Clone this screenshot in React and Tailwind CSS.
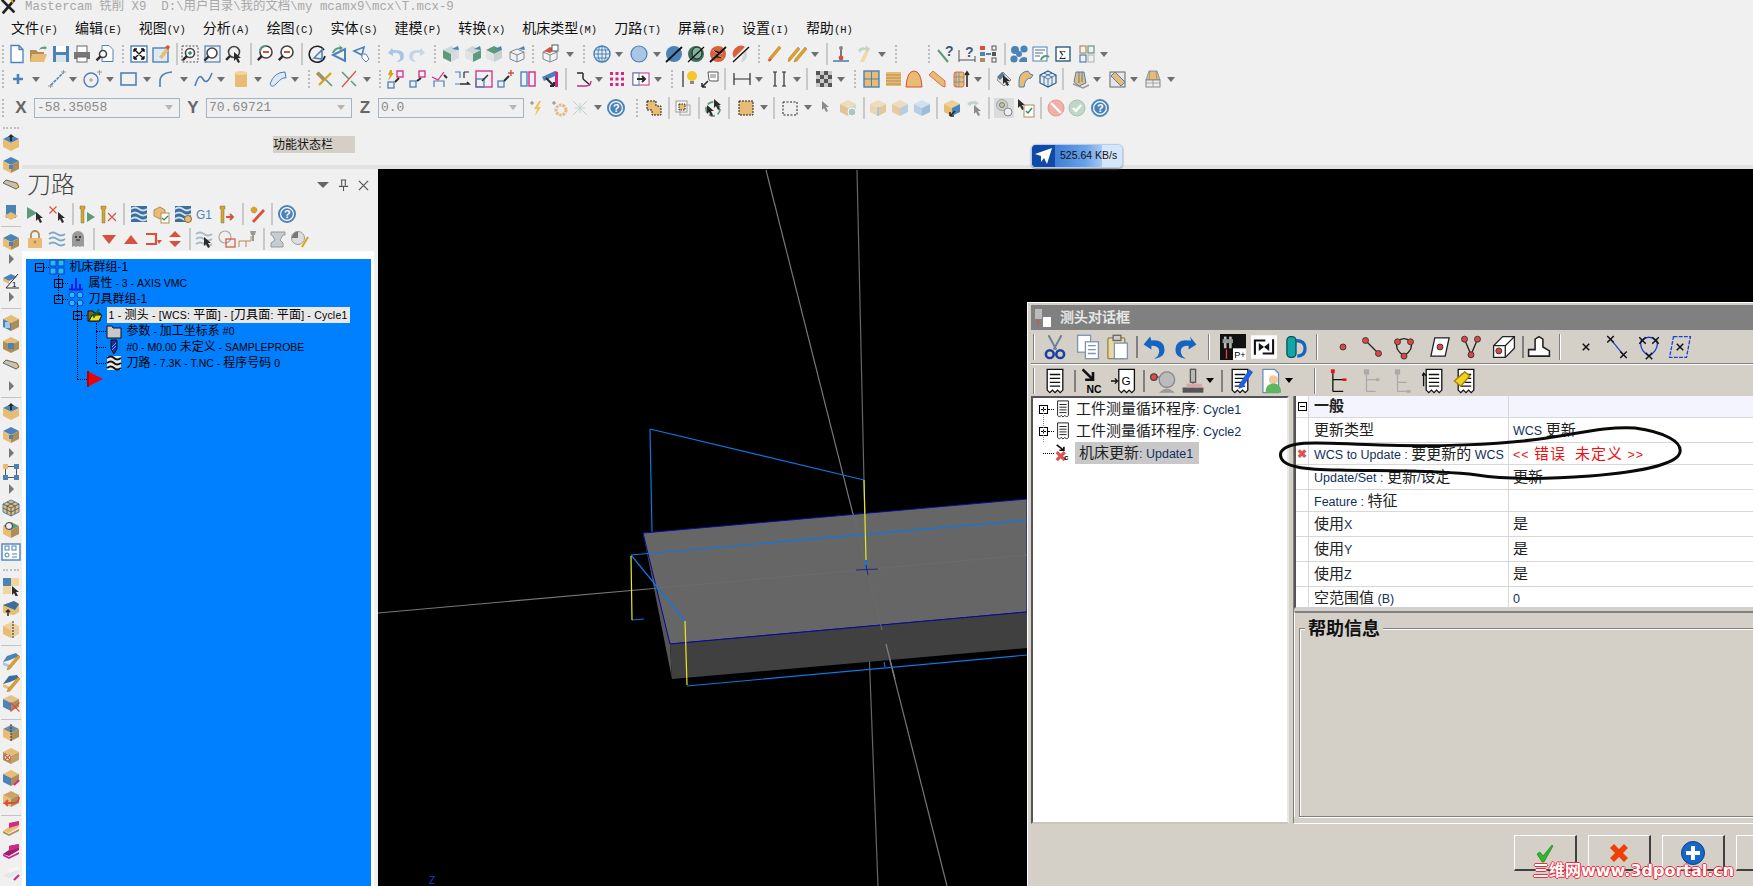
import React from 'react';

const B = '#4b82b8', L = '#a9c6e2', T = '#e8bc72', N = '#b08d57', R = '#d9503c', P = '#cf2b86', K = '#2b2b2b', G = '#7f8a8f', Y = '#d9a520', E = '#5b9a7a';

const cube = (t, l, r, x) => (
  <>
    <polygon points="10,2 18,6 10,10 2,6" fill={t} />
    <polygon points="2,6 10,10 10,18 2,14" fill={l} />
    <polygon points="18,6 10,10 10,18 18,14" fill={r} />
    {x}
  </>
);
const wire = (c = G, f = '#eef2f2') => (
  <path d="M10 5l7 3v7l-7 3l-7-3V8zM3 8l7 3l7-3M10 11v7" fill={f} stroke={c} strokeWidth="1" />
);
const flag = <path d="M11 5l6-3l1 4z" fill={B} />;
const cur = (x, y, c = K) => <path d={`M${x} ${y}v9l2-2l2 4l2-1l-2-4h3z`} fill={c} />;
const mag = (cx, cy, r, c = '#444', f = '#fff') => (
  <>
    <circle cx={cx} cy={cy} r={r} fill={f} stroke={c} strokeWidth="1.6" />
    <path d={`M${cx - r * 0.7} ${cy + r * 0.7}L${cx - r * 0.7 - 4} ${cy + r * 0.7 + 4}`} stroke={K} strokeWidth="2.4" />
  </>
);
const pencil = (x, y, c = Y) => <path d={`M${x + 10} ${y}l2 2l-10 12l-3 1l1-3z`} fill={c} stroke="#a55" strokeWidth="0.4" />;
const tool = (x) => <path d={`M${x} 2h5v3h-1v14h-3V5h-1z`} fill={Y} stroke="#777" strokeWidth="0.5" />;
const waves = (c) => <path d="M2 5q4-3 8 0t8 0M2 10q4-3 8 0t8 0M2 15q4-3 8 0t8 0" fill="none" stroke={c} strokeWidth="1.8" />;
const cross = (x, y, s = 2.5, c = '#111') => <path d={`M${x - s} ${y - s}l${2 * s} ${2 * s}M${x + s} ${y - s}l${-2 * s} ${2 * s}`} stroke={c} strokeWidth="1.1" />;
const node = (x, y) => <circle cx={x} cy={y} r="2.3" fill="#e04545" stroke="#333" strokeWidth="0.7" />;
const page = (lines = true) => (
  <>
    <path d="M4 1h12v16l-2 2l-2-2l-2 2l-2-2l-2 2l-2-2z" fill="#fff" stroke="#111" strokeWidth="1" />
    {lines && <path d="M6 5h8M6 8h8M6 11h8M6 14h8" stroke="#111" strokeWidth="1" />}
  </>
);

const ICONS = {
  doc: <path d="M4 1.5h8l4 4v13H4zM12 1.5v4h4" fill="#fff" stroke={B} strokeWidth="1.3" />,
  open: (
    <>
      <path d="M2 6h6l2 2h6v10H2z" fill={N} />
      <path d="M4 10h15l-3 8H2z" fill={T} />
      <path d="M11 6q2-4 6-3l-1-2l3 3l-3 2l1-1q-3-1-6 1z" fill={E} />
    </>
  ),
  save: (
    <>
      <rect x="2" y="2" width="16" height="16" fill={B} />
      <rect x="5" y="2" width="10" height="6" fill="#fff" />
      <rect x="5" y="11" width="10" height="7" fill="#d8e4ef" />
    </>
  ),
  print: (
    <>
      <rect x="5" y="2" width="10" height="7" fill="#fff" stroke="#666" />
      <rect x="2" y="8" width="16" height="7" fill="#777" />
      <rect x="5" y="13" width="10" height="5" fill="#fff" stroke="#666" />
    </>
  ),
  prev: (
    <>
      <path d="M7 1.5h7l4 4v12H7z" fill="#fff" stroke={B} />
      {mag(8, 10, 3.5)}
    </>
  ),
  fit: (
    <>
      <rect x="2" y="2" width="16" height="16" fill="#fff" stroke={B} strokeWidth="1.4" />
      <path d="M5 5l10 10M15 5L5 15M5 5h3M5 5v3M15 5h-3M15 5v3M5 15h3M5 15v-3M15 15h-3M15 15v-3" stroke="#111" strokeWidth="1.4" fill="none" />
    </>
  ),
  brush: (
    <>
      <rect x="2" y="4" width="15" height="14" fill="#dfe9f2" stroke={B} strokeWidth="1.4" />
      <path d="M8 13l7-9l3 2l-7 9z" fill={T} />
      <path d="M14 3l3-2l2 2l-2 3z" fill={R} />
    </>
  ),
  zwin: (
    <>
      <rect x="2" y="2" width="16" height="16" fill="none" stroke="#555" strokeDasharray="2 1.5" />
      {mag(10, 9, 4.5)}
      <path d="M8 9h4M10 7v4" stroke="#2d8a5a" strokeWidth="1.4" />
    </>
  ),
  zcirc: (
    <>
      <rect x="3" y="2" width="15" height="16" fill="none" stroke={B} strokeWidth="1.2" />
      {mag(10, 9, 5)}
    </>
  ),
  zcur: (
    <>
      {mag(10, 8, 5.5, '#444', '#f0f0f0')}
      {cur(10, 8)}
    </>
  ),
  zo1: (
    <>
      {mag(11, 8, 6)}
      <path d="M8 8h6" stroke={R} strokeWidth="2" />
      <path d="M5 8q0-6 6-6" stroke={E} strokeWidth="2" fill="none" />
    </>
  ),
  zo2: (
    <>
      {mag(11, 8, 6)}
      <path d="M8 8h6" stroke={R} strokeWidth="2" />
    </>
  ),
  rot: (
    <>
      <path d="M16 6A8 8 0 1 0 17 12" fill="none" stroke="#222" strokeWidth="1.6" />
      <path d="M6 14l8-8v9z" fill="none" stroke={B} strokeWidth="1.6" />
    </>
  ),
  va: (
    <>
      <path d="M4 11l12-6v12z" fill="none" stroke={B} strokeWidth="2" />
      <path d="M3 9q2-6 8-6l-1-2l4 3l-4 3l1-2q-4 0-6 4z" fill={E} />
    </>
  ),
  vb: (
    <>
      <path d="M2 7l10-4l-2 8z" fill="none" stroke={B} strokeWidth="1.6" />
      <path d="M10 10l4 0l3 5l-3 3l-4-4z" fill="#fff" stroke={B} />
    </>
  ),
  undo: <path d="M6 4L2 9l5 3V9q6-1 7 3t-4 6q8 0 8-6t-8-6H7z" fill={L} />,
  redo: <path d="M14 4l4 5l-5 3V9q-6-1-7 3t4 6q-8 0-8-6t8-6h3z" fill="#c4d6e6" />,
  c1: <>{cube('#cfd8d8', '#5b9a7a', '#d8dcdc')}{flag}</>,
  c2: <>{cube('#cfd8d8', '#dfe3e3', '#5b9a7a')}{flag}</>,
  c3: <>{cube('#5b9a7a', '#dfe3e3', '#c9d0d0')}{flag}</>,
  c4: <>{wire()}{flag}</>,
  cred: <>{wire()}<path d="M4 7l6-4l5 2l-5 4z" fill={R} /><rect x="12" y="1" width="6" height="6" fill="#fff" stroke="#555" /></>,
  globe: <><circle cx="10" cy="10" r="8" fill="#e8f0f6" stroke={B} strokeWidth="1.4" /><path d="M2 10h16M10 2v16M3.5 6h13M3.5 14h13" stroke={B} /><ellipse cx="10" cy="10" rx="4" ry="8" fill="none" stroke={B} /></>,
  sphere: <circle cx="10" cy="10" r="8" fill={L} stroke={B} strokeWidth="1.2" />,
  sph1: <><circle cx="10" cy="10" r="8" fill={B} /><path d="M2 18L18 3" stroke="#111" strokeWidth="1.8" /></>,
  sph2: <><ellipse cx="10" cy="10" rx="8" ry="8" fill="#3f6f5c" /><ellipse cx="11" cy="9" rx="5" ry="6" fill="#7fb29a" stroke="#222" /><path d="M2 18L18 3" stroke="#111" strokeWidth="1.2" /></>,
  sph3: <><circle cx="10" cy="10" r="8" fill="#d8603a" /><path d="M5 6q5 6 10 3M5 13q5-3 10 1" stroke="#f1a688" /><path d="M2 18L18 3" stroke="#111" strokeWidth="1.8" /></>,
  sph4: <><path d="M3 14a8 8 0 0 1 11-11z" fill="#d8603a" /><path d="M14 6a7 7 0 0 1-4 12z" fill="#d5d5d5" /><path d="M2 18L18 3" stroke="#111" strokeWidth="1.4" /></>,
  pen: <>{pencil(5, 2)}<path d="M5 17l2-2" stroke={R} strokeWidth="2" /></>,
  pens: <>{pencil(0, 3)}{pencil(7, 3)}</>,
  pin: <><path d="M2 17h16" stroke={B} strokeWidth="1.6" /><path d="M10 3v10" stroke="#444" strokeWidth="1.4" /><circle cx="10" cy="4" r="2" fill="#888" /><circle cx="10" cy="14" r="2.4" fill={R} /></>,
  flagf: <><path d="M12 3l3 2l-6 13H5z" fill="#f0d9a6" /><path d="M3 6q3-4 8-2l-1-3l5 4l-4 3V6q-4-1-6 3z" fill="#bcd6c8" /></>,
  q1: <><path d="M3 6l10 12" stroke={E} strokeWidth="2" /><text x="10" y="12" fontSize="14" fontWeight="700" fill="#3c5a7a" fontFamily="Liberation Sans">?</text></>,
  q2: <><path d="M2 6v12M18 12v6M2 16h16" stroke="#555" /><text x="8" y="13" fontSize="14" fontWeight="700" fill="#3c5a7a" fontFamily="Liberation Sans">?</text></>,
  q3: <><rect x="1" y="2" width="5" height="4" fill={R} /><rect x="1" y="8" width="5" height="4" fill={B} /><rect x="1" y="14" width="5" height="4" fill={N} /><path d="M7 10h5" stroke={B} strokeWidth="2" /><rect x="13" y="2" width="4" height="4" fill="none" stroke="#555" /><rect x="13" y="8" width="4" height="4" fill="#555" /><rect x="13" y="14" width="4" height="4" fill="none" stroke="#555" /></>,
  fan: <><circle cx="6" cy="6" r="4" fill={B} /><circle cx="15" cy="5" r="3.6" fill={B} /><circle cx="5" cy="15" r="3.6" fill={B} /><circle cx="10" cy="10" r="3" fill={B} /><path d="M10 18a5 5 0 0 1 8-4v4z" fill={B} /></>,
  rep: <><rect x="2" y="3" width="14" height="14" fill="#fff" stroke={B} /><path d="M4 6h10M4 9h8M4 12h5" stroke="#4d6d88" /><path d="M10 16a5 5 0 0 1 8-3" stroke={E} strokeWidth="2" fill="none" /></>,
  sigma: <><rect x="3" y="3" width="14" height="14" fill="#fff" stroke="#2b5a85" strokeWidth="1.4" /><text x="6" y="14.5" fontSize="12" fill="#222" fontFamily="Liberation Serif">Σ</text></>,
  g4: <><rect x="3" y="2" width="6" height="7" fill="none" stroke={N} strokeWidth="1.2" /><rect x="11" y="2" width="6" height="7" fill="none" stroke={E} strokeWidth="1.2" /><rect x="3" y="11" width="6" height="7" fill="none" stroke={B} strokeWidth="1.2" /><rect x="11" y="11" width="6" height="7" fill="none" stroke="#bbb" strokeWidth="1.2" /></>,
  plus: <path d="M10 5v10M5 10h10" stroke={B} strokeWidth="2.6" />,
  line: <><path d="M4 16L16 4" stroke={B} strokeWidth="1.6" strokeDasharray="3 1" /><path d="M14 3h5M16.5 1v4M1 17h5M3.5 15v4" stroke="#999" /></>,
  circ: <><circle cx="9" cy="11" r="7" fill="none" stroke={B} strokeWidth="1.4" /><path d="M15 3h5M17.5 1v5M7 11h4M9 9v4" stroke="#999" /></>,
  rect: <rect x="2" y="4" width="15" height="12" fill="none" stroke={B} strokeWidth="1.6" />,
  arc: <path d="M4 18V12Q4 4 16 3" fill="none" stroke={B} strokeWidth="1.6" />,
  spl: <path d="M1 17Q5 3 9 10t9-6" fill="none" stroke={B} strokeWidth="1.6" />,
  cyl: <><rect x="4" y="3" width="12" height="15" rx="1.5" fill={T} /><ellipse cx="10" cy="4" rx="6" ry="2" fill="#f2d49d" /></>,
  surf: <path d="M2 15Q6 3 17 3l1 6Q14 8 9 14t-7 1z" fill="#dfe8f1" stroke={B} />,
  trim: <><path d="M3 3l14 14" stroke={E} strokeWidth="1.6" /><path d="M4 16L16 4" stroke={Y} strokeWidth="2.4" /><path d="M2 4l7 7" stroke={N} strokeWidth="3" /></>,
  brk: <><path d="M3 18L17 2" stroke={R} strokeWidth="1.2" /><path d="M3 3l7 7M12 12l5 5" stroke={E} strokeWidth="1.5" /></>,
  x1: <><path d="M6 1h-2l-2 5h2l-2 6l6-8H6z" fill={Y} /><rect x="11" y="2" width="6" height="6" fill="none" stroke={P} strokeWidth="1.3" /><rect x="2" y="13" width="6" height="6" fill="none" stroke={B} strokeWidth="1.3" /><path d="M9 13l4-4" stroke={K} strokeWidth="2" /></>,
  x2: <><rect x="11" y="2" width="6" height="6" fill="none" stroke={P} strokeWidth="1.3" /><rect x="2" y="12" width="6" height="6" fill="none" stroke={B} strokeWidth="1.3" /><path d="M9 12l4-3" stroke={K} strokeWidth="2" /></>,
  x3: <><path d="M2 8l6 3l6-8" fill="none" stroke={P} strokeWidth="1.2" /><path d="M4 18v-6h10v6" fill="none" stroke={B} strokeWidth="1.2" /><path d="M14 6l3 3" stroke={K} strokeWidth="2" /></>,
  x4: <><path d="M3 3h5v6M3 15h5" fill="none" stroke={B} strokeWidth="1.2" /><path d="M12 3h5M12 3v6" fill="none" stroke={K} strokeWidth="1.2" /><path d="M8 15h9l-2-2" fill="none" stroke={K} strokeWidth="1.6" /></>,
  x5: <><rect x="2" y="2" width="16" height="16" fill="none" stroke={P} strokeWidth="1.3" /><rect x="2" y="10" width="8" height="8" fill="none" stroke={B} strokeWidth="1.3" /><path d="M8 12l6-6" stroke={K} strokeWidth="1.5" /></>,
  x6: <><rect x="2" y="12" width="6" height="6" fill="none" stroke={B} strokeWidth="1.3" /><path d="M8 12l5-5" stroke={K} strokeWidth="2" /><path d="M12 4h6M15 1v6" stroke={R} strokeWidth="1.4" /></>,
  x7: <><rect x="3" y="3" width="6" height="14" fill="none" stroke={B} strokeWidth="1.4" /><rect x="11" y="3" width="6" height="14" fill="none" stroke={P} strokeWidth="1.4" /></>,
  x8: <><path d="M2 8l13-6v5L4 12z" fill={B} /><path d="M15 2l3 1v15h-3z" fill={P} /><path d="M6 9l8 8M14 17v-4M14 17h-4" stroke={K} strokeWidth="2" fill="none" /></>,
  x9: <><path d="M3 4h6M9 4v6M9 10l7 6" stroke={K} strokeWidth="1.5" fill="none" /><path d="M3 17h9q5 0 5-5" stroke={P} strokeWidth="1.4" fill="none" /></>,
  dots: <path d="M3 3h3v3H3zM8.5 3h3v3h-3zM14 3h3v3h-3zM3 8.5h3v3H3zM8.5 8.500h3v3h-3zM14 8.500h3v3h-3zM3 14h3v3H3zM8.500 14h3v3h-3zM14 14h3v3h-3z" fill={P} />,
  boxa: <><rect x="2" y="4" width="16" height="12" fill="#fff" stroke={P} /><rect x="2" y="4" width="6" height="12" fill="#fff" stroke={B} /><path d="M6 10h8M11 7l3 3l-3 3" stroke={K} strokeWidth="2" fill="none" /></>,
  bulb: <><path d="M4 2v16" stroke={K} strokeWidth="1.2" /><circle cx="13" cy="7" r="5" fill="#f3c62a" /><rect x="11" y="12" width="4" height="3" fill="#888" /></>,
  note: <><path d="M8 3h10v9H11l-2-1z" fill="#fff" stroke="#555" /><path d="M10 6h6M10 8h6" stroke="#777" /><path d="M2 18l6-6M2 18h4M2 18v-4" stroke={K} strokeWidth="1.6" fill="none" /></>,
  dimh: <path d="M2 4v12M18 4v12M2 10h16" stroke={K} strokeWidth="1.2" />,
  dimv: <path d="M5 3v14M14 3v14M3 3h4M3 17h4M12 3h4M12 17h4" stroke={K} strokeWidth="1.2" />,
  chk: <><rect x="2" y="2" width="16" height="16" fill="#c8c8c8" /><path d="M2 2h4v4H2zM10 2h4v4h-4zM6 6h4v4H6zM14 6h4v4h-4zM2 10h4v4H2zM10 10h4v4h-4zM6 14h4v4H6zM14 14h4v4h-4z" fill="#555" /></>,
  gt: <><rect x="3" y="2" width="15" height="16" fill={T} stroke={B} strokeWidth="1.4" /><path d="M10.500 2v16M3 10h15" stroke={B} /></>,
  gl: <><rect x="3" y="3" width="15" height="14" fill={T} /><path d="M3 6h15M3 9h15M3 12h15M3 15h15" stroke={N} /></>,
  arch: <path d="M2 18Q3 2 10 2t8 16z" fill={T} stroke={R} />,
  fold: <path d="M2 6l4-4l12 10v6l-3-1z" fill={T} stroke={R} strokeWidth="0.8" />,
  cyl2: <><rect x="3" y="3" width="10" height="15" rx="2" fill={T} stroke={R} strokeWidth="0.8" /><path d="M5 3v15M8 3v15M3 8h10M3 13h10" stroke={B} strokeWidth="0.6" /><path d="M16 3v15M14 6l2-3l2 3" stroke={K} strokeWidth="1.6" fill="none" /></>,
  s1: <><path d="M3 11l6-8l8 8l-7 6z" fill="#dde3e8" stroke="#8a8a8a" /><path d="M3 8l5-5l3 3l-5 5z" fill="#557a9c" />{cur(9, 6)}</>,
  s2: <path d="M3 18v-6q0-9 9-10l2 3l3 1l-2 3q-6 0-7 9z" fill={T} stroke={B} />,
  mesh: <><path d="M10 2l8 4v8l-8 4l-8-4V6z" fill="#e6eef5" stroke="#2b5a85" strokeWidth="1.2" /><path d="M2 6l8 4l8-4M10 10v8M6 4l8 4v8M14 4L6 8v8" stroke="#2b5a85" fill="none" strokeWidth="0.8" /></>,
  m1: <><path d="M5 3h8l2 11l-7 3l-5-4z" fill={T} stroke={B} /><path d="M8 3v11M11 3v10" stroke={B} /><path d="M2 15l10 4l6-3" fill="none" stroke="#999" strokeWidth="1.4" /></>,
  m2: <><rect x="3" y="3" width="15" height="15" fill="#e6e6e6" stroke="#666" /><path d="M4 7l4-4l10 10l-4 4z" fill={T} stroke={B} /></>,
  m3: <><path d="M6 2h8l3 9H3z" fill={T} stroke={B} strokeWidth="0.7" /><rect x="3" y="11" width="14" height="7" fill="#eee" stroke="#888" /><path d="M3 14h14M10 11v7M7 2l-1 9M13 2l1 9" stroke="#888" strokeWidth="0.7" /></>,
  zap: <><path d="M4 5h4M6 3v4" stroke="#888" /><path d="M13 3l-5 8h3l-2 7l6-9h-3l3-6z" fill="#ecc45c" /></>,
  gear: <><path d="M3 5h4M5 3v4" stroke="#888" /><circle cx="12" cy="12" r="5" fill="none" stroke="#e0bc84" strokeWidth="3" strokeDasharray="2.500 1" /></>,
  xx: <path d="M3 3l14 14M17 3L3 17M5 10h10M10 5v10" stroke="#bfd3cc" strokeWidth="1" />,
  help: <><circle cx="10" cy="10" r="8" fill="#fff" stroke={B} strokeWidth="2" /><circle cx="10" cy="10" r="5.800" fill={B} /><text x="7" y="14" fontSize="11" fontWeight="700" fill="#fff" fontFamily="Liberation Sans">?</text></>,
  sel1: <rect x="3" y="3" width="14" height="14" fill={T} stroke="#222" strokeDasharray="2 1" />,
  sel2: <><path d="M3 3h9v5h5v9H8v-5H3z" fill={T} stroke="#222" strokeDasharray="2 1" /></>,
  sel3: <><rect x="3" y="3" width="11" height="11" fill="#fff" stroke="#999" /><rect x="7" y="7" width="10" height="10" fill="none" stroke="#aaa" /><rect x="6" y="6" width="6" height="6" fill={T} stroke="#222" strokeDasharray="1.500 1" /></>,
  sel4: <><circle cx="10" cy="11" r="7" fill="none" stroke={E} strokeWidth="1.800" strokeDasharray="6 3" />{cur(4, 7)}{cur(11, 1)}</>,
  sel5: <rect x="3" y="4" width="14" height="13" fill="none" stroke="#222" strokeDasharray="2 1.500" />,
  ptr: cur(6, 3, '#8a8a8a'),
  cchk: <>{cube('#f0dcbc', '#e2c498', '#cfd6d6')}<circle cx="14" cy="14" r="4" fill="#a8c9b6" stroke="#fff" /></>,
  f1: cube('#f0dcbc', '#ecd5ae', '#dfc79e', <path d="M9 9h2v9H9z" fill={L} />),
  f2: cube('#f0dcbc', '#e6cba0', '#b9cde0'),
  f3: cube('#d2e0ee', '#b6cfe6', '#9fbdd9'),
  f4: <>{cube('#f0cf95', T, B)}<path d="M8 18l5-5M8 18h4M8 18v-4" stroke={K} strokeWidth="1.600" fill="none" /></>,
  f5: <><path d="M3 6q3-4 8-2l-1-2l5 3l-4 3V6q-3-1-5 2z" fill="#bcd6c8" />{cur(10, 7, '#8a8a8a')}</>,
  cap: <><rect x="0" y="0" width="20" height="20" fill="#dcdcdc" /><circle cx="8" cy="7" r="5.500" fill="#d5cfc0" stroke="#9aa" /><circle cx="8" cy="7" r="2.500" fill={T} stroke={B} /><circle cx="14" cy="14" r="4" fill="#eee" stroke="#888" /></>,
  pchk: <>{cur(2, 1)}<rect x="8" y="7" width="10" height="12" fill="#fff" stroke={N} /><path d="M10 13l2 2l4-5" stroke="#2d8a5a" strokeWidth="1.400" fill="none" /></>,
  no: <><circle cx="10" cy="10" r="8" fill="#efb1a8" stroke="#e69a90" /><path d="M5 5l10 10" stroke="#fff" strokeWidth="2.400" /></>,
  ok: <><circle cx="10" cy="10" r="8" fill="#bfd6c8" stroke="#a9c4b4" /><path d="M6 10l3 3l5-6" stroke="#fff" strokeWidth="2.200" fill="none" /></>,
  // panel toolbar
  pl1: <><path d="M2 3l10 6l-10 6z" fill="#5b9a7a" />{cur(11, 8)}</>,
  pl2: <>{cross(6, 6, 3.500, R)}{cur(11, 8)}</>,
  pl3: <>{tool(3)}<path d="M10 8l8 5l-8 5z" fill="#5b9a7a" /></>,
  pl4: <>{tool(3)}{cross(14, 13, 4, R)}</>,
  wav: <><rect x="2" y="2" width="16" height="16" fill="#3c6e9c" />{waves('#cfe0ee')}</>,
  pchk2: <><path d="M3 6l6-3l5 3v6l-5 3l-6-3z" fill={T} stroke={N} /><rect x="10" y="9" width="8" height="10" fill="#fff" stroke={N} /><path d="M11 14l2 2l4-4" stroke="#2d8a5a" strokeWidth="1.200" fill="none" /></>,
  wavg: <><rect x="2" y="2" width="16" height="16" fill="#3c6e9c" />{waves('#cfe0ee')}<circle cx="15" cy="15" r="3.500" fill={T} stroke="#8a6a3a" /></>,
  g1: <text x="1" y="15" fontSize="12" fill="#4b82b8" fontFamily="Liberation Sans">G1</text>,
  toa: <>{tool(3)}<path d="M9 13h7M13 10l3 3l-3 3" stroke={R} strokeWidth="1.800" fill="none" /></>,
  dyn: <><path d="M5 17L16 5l2 2L7 19z" fill={R} /><circle cx="7" cy="6" r="3" fill={Y} stroke={N} strokeDasharray="1 1" /></>,
  lock: <><path d="M6 9V6a4 4 0 0 1 8 0v3" fill="none" stroke={N} strokeWidth="1.800" /><rect x="3" y="9" width="14" height="10" rx="1" fill={T} /><circle cx="10" cy="13" r="1.500" fill={N} /></>,
  wavl: waves('#7fa6c9'),
  ghost: <><path d="M4 18V8a6 6 0 0 1 12 0v10l-2-1l-2 1l-2-1l-2 1l-2-1z" fill="#999" /><circle cx="8" cy="8" r="1" fill="#222" /><circle cx="12" cy="8" r="1" fill="#222" /><path d="M8 11h4" stroke="#222" /></>,
  dn: <path d="M3 6h14l-7 9z" fill={R} />,
  up: <path d="M3 15h14l-7-9z" fill={R} />,
  lp: <><path d="M3 5h10v10H3" fill="none" stroke={R} strokeWidth="2.200" /><path d="M14 11h5l-3 4z" fill={R} /></>,
  ud: <><path d="M4 8h12l-6-6zM4 12h12l-6 6z" fill={R} /><path d="M3 10h14" stroke="#fff" /></>,
  wcur: <>{waves('#a9b9c6')}{cur(10, 8)}</>,
  cboxes: <><circle cx="8" cy="8" r="6" fill="none" stroke="#aaa" strokeWidth="1.200" /><rect x="9" y="10" width="9" height="8" fill="none" stroke={R} strokeWidth="1.200" /></>,
  stp: <><path d="M1 18v-6h7v6M8 12h5V7" fill="none" stroke={N} /><path d="M12 2h6l-1 4h-4z" fill="#999" /><path d="M15 6v6" stroke="#999" strokeWidth="2" /></>,
  sim: <><path d="M3 3h14v3h-2l-3 5l3 3v4H3v-4l4-3l-3-5H3z" fill="#c5ccd2" stroke="#999" /></>,
  ball: <><circle cx="8" cy="9" r="6.500" fill="#ddd" stroke="#999" /><path d="M8 9V2.500a6.500 6.500 0 0 0-6 6.500z" fill="#777" /><path d="M12 18l6-10" stroke={Y} strokeWidth="2" /></>,
  // left strip
  a1: cube(B, T, T, <path d="M10 1l3 3h-2v4H9V4H7z" fill={K} />),
  a2: cube(B, T, N, <rect x="8" y="10" width="4" height="4" fill={B} />),
  a3: <>{cube(T, N, B)}<path d="M3 14l6 2" stroke={K} strokeWidth="1.600" /></>,
  a4: <><path d="M3 7q8-4 14 0l-2 8q-6 3-10 0z" fill={N} /><path d="M3 14l13-10l3 3z" fill="#8db1d0" /></>,
  a5: <><rect x="5" y="3" width="10" height="13" fill={B} /><path d="M3 14l7-4l7 4l-7 4z" fill={T} /></>,
  a6: cube(T, B, N, <rect x="4" y="9" width="5" height="6" fill={L} />),
  a7: <>{cube(T, N, N)}<rect x="7" y="8" width="6" height="6" fill={B} /></>,
  a8: <><path d="M2 5l13 6l3-2l-2-4L5 2z" fill={T} stroke="#333" strokeWidth="0.700" /><path d="M5 3l10 4l-1 2L4 5z" fill={L} /></>,
  a9: <><path d="M2 8l8-4l6 3l-8 4z" fill={B} /><path d="M2 8l6 3v3l-6-3z" fill={T} /><path d="M5 18l12-14M18 18H5" fill="none" stroke={K} strokeWidth="1" /><text x="11" y="17" fontSize="8" fontFamily="Liberation Sans">1</text></>,
  a10: <><path d="M3 2h15v16H3z" fill="none" /><rect x="2" y="2" width="5" height="5" fill={T} /><rect x="13" y="2" width="5" height="5" fill={B} /><rect x="2" y="13" width="5" height="5" fill={B} /><rect x="13" y="13" width="5" height="5" fill={B} /><path d="M7 4.500h6M7 15.500h6M4.500 7v6M15.500 7v6" stroke="#555" /></>,
  a11: <><path d="M10 2l8 4v8l-8 4l-8-4V6z" fill={T} stroke={B} /><path d="M2 6l8 4l8-4M10 10v8M6 4l8 4v8M14 4L6 8v8M2 10l8 4l8-4" stroke="#3c5a7a" fill="none" strokeWidth="0.900" /></>,
  a12: <>{cube(E, T, N)}<circle cx="8" cy="6" r="3.500" fill="#eee" stroke="#333" /></>,
  a13: <><rect x="1" y="2" width="18" height="16" fill="#fff" stroke={B} strokeWidth="1.400" /><rect x="4" y="4" width="4" height="4" fill="none" stroke={B} /><rect x="11" y="4" width="4" height="4" fill="none" stroke={B} /><circle cx="6" cy="13" r="2" fill="none" stroke={B} /><path d="M11 12h5M11 15h5" stroke={B} /></>,
  a14: <><rect x="2" y="2" width="8" height="8" fill={B} /><rect x="10" y="2" width="8" height="8" fill="#f2d49d" /><rect x="2" y="10" width="8" height="8" fill="#f2d49d" />{cur(11, 10)}</>,
  a15: <><path d="M2 7l11-4l5 3v8l-5 3l-11-2z" fill={T} /><path d="M2 7l11-4l5 3l-4 6z" fill="#3c6e9c" /><path d="M7 18v-5M5 14l2-2l2 2" stroke={K} strokeWidth="1.500" fill="none" /></>,
  a16: cube('#eed09d', T, '#e9cd9e', <path d="M12 1v18" stroke={K} strokeWidth="1" strokeDasharray="2 1" />),
  a17: <><path d="M2 12l4-6l9-3l3 3l-9 4z" fill={B} /><path d="M2 12l7 3v3l-7-3z" fill={L} />{pencil(7, 5)}</>,
  a18: <><path d="M2 12l6-8l8-1l2 3l-9 4z" fill="#3c6e9c" /><path d="M2 12l7 3v3l-7-3z" fill={T} />{pencil(7, 5)}</>,
  a19: <>{cube('#e6c088', B, N)}{cross(14, 14, 4.500, R)}</>,
  a20: <>{cube('#6f8aa0', T, N)}<path d="M10 1v18" stroke={K} strokeDasharray="2 1" /></>,
  a21: <>{cube(T, N, '#c39e68')}<rect x="4" y="9" width="5" height="5" fill="#eee" />{cross(6.500, 11.500, 2.500, R)}</>,
  a22: <>{cube(T, B, N)}<path d="M13 17l5-5" stroke={P} strokeWidth="2.200" /></>,
  a23: <>{cube('#c9a56e', T, N)}<path d="M18 8q0 6-6 6H4l3-3M4 14l3 3" stroke={R} strokeWidth="1.800" fill="none" /></>,
  a24: <><path d="M2 13l6-4V5l10-2v6l-10 6z" fill={T} /><path d="M8 5l10-2v4L8 10z" fill={P} /><path d="M2 13l6 3l10-5v2L8 18l-6-3z" fill={N} /></>,
  a25: <><path d="M2 13l6-4V5l10-2v6l-10 6z" fill="#a01c6c" /><path d="M8 5l10-2v4L8 10z" fill={P} /><path d="M2 13l6 3l10-5v2L8 18l-6-3z" fill={P} /></>,
  a26: <><path d="M2 13l6-4V5l10-2v6l-10 6z" fill="#e6e6e6" /><path d="M8 5l10-2v4L8 10z" fill="#f5f5f5" /><path d="M13 17l5-5" stroke={P} strokeWidth="2.200" /></>,
  // dialog toolbar
  scis: <><path d="M5 1l6 11M15 1L9 12" stroke="#6b7f95" strokeWidth="1.500" /><circle cx="6" cy="15.500" r="3" fill="none" stroke="#1f3f9e" strokeWidth="2" /><circle cx="14" cy="15.500" r="3" fill="none" stroke="#1f3f9e" strokeWidth="2" /></>,
  copy: <><rect x="2" y="1" width="10" height="13" fill="#fff" stroke="#7d92b5" /><rect x="8" y="6" width="10" height="13" fill="#fff" stroke="#7d92b5" /><path d="M10 9h6M10 12h6M10 15h6" stroke="#7d92b5" /></>,
  paste: <><rect x="3" y="3" width="13" height="16" rx="1" fill="#e8d9a0" stroke="#8d8455" /><rect x="7" y="1" width="6" height="4" fill="#ccc" stroke="#666" /><rect x="8" y="7" width="10" height="12" fill="#fff" stroke="#7d92b5" /></>,
  dundo: <path d="M7 2L2 8l6 4V9q6 0 6 4t-4 6q9-1 8-8t-10-6H8z" fill="#1564c0" />,
  dredo: <path d="M13 2l5 6l-6 4V9q-6 0-6 4t4 6q-9-1-8-8t10-6h2z" fill="#1564c0" />,
  probe: <><rect x="0" y="0" width="20" height="20" fill="#111" /><rect x="3" y="2" width="2" height="9" fill="#bbb" /><rect x="7" y="2" width="2" height="9" fill="#bbb" /><rect x="2" y="4" width="8" height="3" fill="#999" /><rect x="10" y="11" width="10" height="9" fill="#fff" /><text x="11" y="18.500" fontSize="7" fontFamily="Liberation Sans">P+</text><path d="M5 12v7" stroke="#e44" /></>,
  swap: <><rect x="0" y="1" width="20" height="18" fill="#fff" /><path d="M3 16V5h8M17 4v11H9" stroke="#111" strokeWidth="1.600" fill="none" /><path d="M10 10l4-3v6zM10 10l-4-3v6z" fill="#111" /></>,
  tur: <><rect x="3" y="2" width="7" height="16" rx="3" fill="#12a5a5" stroke="#055" /><path d="M10 5q7 0 7 6t-6 6" fill="none" stroke="#1564c0" strokeWidth="2.500" /></>,
  p1: node(10, 10),
  p2: <><path d="M5 5l10 10" stroke="#222" />{node(5, 5)}{node(15, 15)}</>,
  p3: <><path d="M5 6q5-5 10 0q3 5-5 11q-8-6-5-11z" fill="none" stroke="#222" />{node(5, 6)}{node(15, 6)}{node(10, 17)}</>,
  p4: <><path d="M6 3h11l-3 14H3z" fill="#fff" stroke="#222" />{node(10, 10)}</>,
  p5: <><path d="M5 4l5 12l5-12" fill="none" stroke="#222" />{node(5, 4)}{node(15, 4)}{node(10, 16)}</>,
  p6: <><path d="M2 9l7-7h9v9l-7 7H2zM2 9h9v9M11 9l7-7" fill="#fff" stroke="#222" />{node(6, 13)}</>,
  p7: <path d="M2 17v-5h5V4l3-2l3 2v6l5 3v4z" fill="#fff" stroke="#222" strokeWidth="1.200" />,
  c_p: cross(10, 10),
  c_l: <><path d="M5 4l10 12" stroke="#1f3fcf" />{cross(5, 4)}{cross(15, 16)}</>,
  c_c: <><path d="M4 5q6-5 12 0q2 7-6 12q-8-5-6-12z" fill="none" stroke="#1f3fcf" />{cross(5, 5)}{cross(15, 5)}{cross(10, 17)}</>,
  c_r: <><path d="M5 2h13l-3 16H2z" fill="none" stroke="#1f3fcf" strokeDasharray="3 1" />{cross(10, 10)}</>,
  dpage: page(),
  nc: <><path d="M2 1l8 8M10 3v6H4" stroke="#111" strokeWidth="2" fill="none" /><text x="5" y="19" fontSize="8" fontWeight="700" fontFamily="Liberation Sans">NC</text></>,
  gpage: <><path d="M6 1h12v16l-2 2l-2-2l-2 2l-2-2l-2 2l-2-2z" fill="#fff" stroke="#111" /><text x="8" y="13" fontSize="9" fontFamily="Liberation Sans">G</text><path d="M0 10h5M3 8l2 2l-2 2" stroke="#111" fill="none" /></>,
  ball2: <><path d="M5 7h5" stroke="#666" /><circle cx="3" cy="7" r="2.500" fill="#e44" stroke="#444" /><circle cx="13" cy="9" r="6" fill="#bbb" stroke="#888" /><path d="M7 19q6-6 12 0z" fill="#999" /></>,
  mill: <><rect x="8" y="1" width="4" height="10" fill="#bbb" stroke="#555" /><path d="M10 11v4" stroke="#555" /><rect x="2" y="15" width="16" height="4" fill="#555" /><rect x="5" y="12" width="12" height="3" fill="#d8a8a8" /></>,
  pen2: <>{page()}<path d="M9 13L17 1l3 2l-8 12l-3 1z" fill="#1f5fe0" /></>,
  user: <><path d="M3 1h9l3 3v15H3z" fill="#fff" stroke="#6c8bb5" /><circle cx="11" cy="9" r="3.500" fill="#f0c8a0" /><path d="M5 19q0-7 6-7t6 7z" fill="#5cb85c" /></>,
  tr1: <><rect x="3" y="1" width="3" height="3" fill="#e11" /><path d="M4.500 4v14M4.500 9h8M4.500 18h8" stroke="#111" fill="none" /><rect x="12" y="8" width="3" height="2" fill="#e11" /></>,
  tr2: <><rect x="3" y="1" width="4" height="4" fill="#aaa" /><path d="M5 5v13M5 9h7M5 18h7" stroke="#aaa" fill="none" /><rect x="12" y="8" width="3" height="2" fill="#aaa" /></>,
  tr3: <><rect x="3" y="1" width="4" height="4" fill="#aaa" /><path d="M5 5v13M5 11h7M5 18h7" stroke="#aaa" fill="none" /><rect x="12" y="17" width="3" height="2" fill="#aaa" /></>,
  tr4: <>{page()}<path d="M2 4v10M1 6l1-2l2 2" stroke="#111" fill="none" /></>,
  tag: <>{page()}<path d="M1 10l8-7l4 3l-7 8z" fill="#f0d020" stroke="#a08000" /></>,
};

const Icon = ({ k, className = 'w-[20px] h-[20px] shrink-0' }) => (
  <svg viewBox="0 0 20 20" className={className}>{ICONS[k]}</svg>
);

const widthOf = (k, big) => (k === '^' ? 8 : k === '|' || k === ':' || k === '#' ? 2 : big ? 26 : 20);

function Tok({ k, ml, big }) {
  const style = { marginLeft: ml };
  if (k === '^') return <span style={style} className={`w-0 h-0 shrink-0 border-x-[4px] border-x-transparent border-t-[5px] ${big ? 'border-t-black' : 'border-t-[#6f6f6f]'}`} />;
  if (k === '|') return <span style={style} className={`w-[2px] h-[22px] shrink-0 ${big ? 'bg-[#808080]' : 'bg-[#c9c9c9]'}`} />;
  if (k === ':') return <span style={style} className="w-[2px] h-[18px] shrink-0 border-l-2 border-dotted border-[#bcbcbc]" />;
  if (k === '#') return <span style={style} className="w-[2px] h-[26px] shrink-0 border-l border-r border-l-[#808080] border-r-white" />;
  return <span style={style} className="shrink-0 flex"><Icon k={k} className={big ? 'w-[26px] h-[26px] shrink-0' : 'w-[20px] h-[20px] shrink-0'} /></span>;
}

// places items along a toolbar by their centre x
function Row({ start = 0, items, big = false, className = '' }) {
  let at = start;
  return (
    <div className={`flex items-center ${className}`}>
      {items.map(([x, k], i) => {
        const w = widthOf(k, big);
        const ml = x - w / 2 - at;
        at = x + w / 2;
        return <Tok key={i} k={k} ml={ml} big={big} />;
      })}
    </div>
  );
}

const row1 = [[3,':'],[17,'doc'],[38,'open'],[61,'save'],[82,'print'],[105,'prev'],[123,':'],[139,'fit'],[161,'brush'],[177,'|'],[190,'zwin'],[212,'zcirc'],[234,'zcur'],[251,'|'],[265,'zo1'],[286,'zo2'],[302,'|'],[318,'rot'],[339,'va'],[362,'vb'],[379,':'],[396,'undo'],[417,'redo'],[435,':'],[451,'c1'],[473,'c2'],[494,'c3'],[517,'c4'],[533,':'],[550,'cred'],[570,'^'],[584,':'],[602,'globe'],[619,'^'],[639,'sphere'],[657,'^'],[674,'sph1'],[696,'sph2'],[718,'sph3'],[741,'sph4'],[759,':'],[774,'pen'],[798,'pens'],[815,'^'],[827,'|'],[841,'pin'],[865,'flagf'],[882,'^'],[896,':'],[929,':'],[945,'q1'],[967,'q2'],[989,'q3'],[1005,'|'],[1019,'fan'],[1041,'rep'],[1063,'sigma'],[1087,'g4'],[1104,'^']];
const row2 = [[3,':'],[18,'plus'],[36,'^'],[57,'line'],[73,'^'],[92,'circ'],[110,'^'],[129,'rect'],[147,'^'],[166,'arc'],[184,'^'],[204,'spl'],[221,'^'],[241,'cyl'],[258,'^'],[278,'surf'],[295,'^'],[309,':'],[325,'trim'],[349,'brk'],[367,'^'],[380,':'],[396,'x1'],[418,'x2'],[440,'x3'],[462,'x4'],[484,'x5'],[506,'x6'],[528,'x7'],[550,'x8'],[566,'|'],[584,'x9'],[599,'^'],[617,'dots'],[641,'boxa'],[658,'^'],[672,':'],[689,'bulb'],[710,'note'],[725,'|'],[742,'dimh'],[759,'^'],[780,'dimv'],[797,'^'],[807,'|'],[824,'chk'],[841,'^'],[855,':'],[871,'gt'],[893,'gl'],[914,'arch'],[937,'fold'],[961,'cyl2'],[978,'^'],[989,'|'],[1004,'s1'],[1026,'s2'],[1048,'mesh'],[1063,'|'],[1081,'m1'],[1097,'^'],[1117,'m2'],[1134,'^'],[1153,'m3'],[1171,'^']];
const row3 = [[536,'zap'],[559,'gear'],[580,'xx'],[598,'^'],[616,'help'],[637,':'],[654,'sel2'],[669,'|'],[683,'sel3'],[699,'|'],[713,'sel4'],[729,'|'],[746,'sel1'],[764,'^'],[774,'|'],[790,'sel5'],[808,'^'],[826,'ptr'],[848,'cchk'],[864,'|'],[878,'f1'],[900,'f2'],[922,'f3'],[937,'|'],[952,'f4'],[974,'f5'],[989,'|'],[1004,'cap'],[1026,'pchk'],[1041,'|'],[1056,'no'],[1077,'ok'],[1100,'help']];

const panel1 = [[35,'pl1'],[57,'pl2'],[73,'|'],[87,'pl3'],[108,'pl4'],[124,'|'],[139,'wav'],[161,'pchk2'],[183,'wavg'],[205,'g1'],[227,'toa'],[243,'|'],[257,'dyn'],[272,'|'],[287,'help']];
const panel2 = [[35,'lock'],[57,'wavl'],[78,'ghost'],[94,'|'],[109,'dn'],[131,'up'],[153,'lp'],[175,'ud'],[190,'|'],[204,'wcur'],[227,'cboxes'],[248,'stp'],[264,'|'],[278,'sim'],[300,'ball']];

const dlg1 = [[1034,'#'],[1055,'scis'],[1088,'copy'],[1117,'paste'],[1137,'|'],[1154,'dundo'],[1186,'dredo'],[1209,'#'],[1233,'probe'],[1264,'swap'],[1296,'tur'],[1317,'#'],[1343,'p1'],[1372,'p2'],[1404,'p3'],[1440,'p4'],[1471,'p5'],[1504,'p6'],[1523,'|'],[1539,'p7'],[1560,'#'],[1586,'c_p'],[1617,'c_l'],[1649,'c_c'],[1680,'c_r']];
const dlg2 = [[1034,'#'],[1055,'dpage'],[1075,'|'],[1093,'nc'],[1124,'gpage'],[1144,'|'],[1163,'ball2'],[1193,'mill'],[1210,'^'],[1222,'|'],[1240,'pen2'],[1272,'user'],[1289,'^'],[1315,'#'],[1340,'tr1'],[1373,'tr2'],[1404,'tr3'],[1434,'tr4'],[1466,'tag']];

const strip = [[128,'.'],[143,'a1'],[165,'a2'],[188,'a8'],[212,'a5'],[226,'-'],[242,'a2'],[259,'>'],[280,'a9'],[297,'>'],[308,'-'],[323,'a6'],[345,'a7'],[368,'a8'],[386,'>'],[397,'-'],[412,'a1'],[435,'a2'],[453,'>'],[472,'a10'],[489,'>'],[508,'a11'],[530,'a12'],[552,'a13'],[570,'.'],[586,'a14'],[608,'a15'],[630,'a16'],[645,'-'],[660,'a17'],[682,'a18'],[703,'a19'],[719,'-'],[733,'a20'],[756,'a21'],[778,'a22'],[799,'a23'],[815,'-'],[828,'a24'],[851,'a25'],[873,'a26']];

function LeftStrip() {
  let at = 122;
  return (
    <div className="w-[22px] h-[764px] shrink-0 flex flex-col items-center overflow-hidden">
      {strip.map(([y, k], i) => {
        const h = k === '-' ? 1 : k === '.' ? 2 : k === '>' ? 10 : 20;
        const mt = y - h / 2 - at;
        at = y + h / 2;
        const style = { marginTop: mt };
        if (k === '-') return <span key={i} style={style} className="w-[20px] h-px shrink-0 bg-[#c4c4c4]" />;
        if (k === '.') return <span key={i} style={style} className="w-[16px] h-[2px] shrink-0 border-t-2 border-dotted border-[#c0c0c0]" />;
        if (k === '>') return <span key={i} style={style} className="w-0 h-0 shrink-0 border-y-[5px] border-y-transparent border-l-[5px] border-l-[#777]" />;
        return <span key={i} style={style} className="flex shrink-0"><Icon k={k} /></span>;
      })}
    </div>
  );
}

// CJK and latin runs sit at different sizes, as they do in the old dialog fonts
function Mix({ t, cjk, lat }) {
  const runs = t.match(/[\u3400-\u9fff]+|[^\u3400-\u9fff]+/g) || [];
  return runs.map((r, i) => <span key={i} className={/[\u3400-\u9fff]/.test(r) ? cjk : lat}>{r}</span>);
}
const TreeText = ({ t }) => <Mix t={t} cjk="text-[12px]" lat="text-[10.500px]" />;
const GridText = ({ t }) => <Mix t={t} cjk="text-[15px] text-[#222]" lat="text-[12.500px] text-[#12305c]" />;

const menus = [['文件','(F)'],['编辑','(E)'],['视图','(V)'],['分析','(A)'],['绘图','(C)'],['实体','(S)'],['建模','(P)'],['转换','(X)'],['机床类型','(M)'],['刀路','(T)'],['屏幕','(R)'],['设置','(I)'],['帮助','(H)']];

function CoordInput({ label, value }) {
  return (
    <div className="flex items-center w-[172px]">
      <span className="w-[26px] text-center text-[17px] font-bold text-[#666] font-['Liberation_Sans']">{label}</span>
      <div className="w-[146px] h-[20px] border border-[#a5b3c4] flex items-center justify-between pl-[2px] pr-[6px]">
        <span className="font-['Liberation_Mono'] text-[13px] text-[#8a8a8a]">{value}</span>
        <span className="w-0 h-0 border-x-[4px] border-x-transparent border-t-[5px] border-t-[#b5b5b5]" />
      </div>
    </div>
  );
}

function Expander({ open, className = '' }) {
  return (
    <span className={`relative w-[9px] h-[9px] shrink-0 border border-black bg-transparent flex items-center justify-center ${className}`}>
      <span className="w-[5px] h-px bg-black" />
      {!open && <span className="absolute w-px h-[5px] bg-black" />}
    </span>
  );
}

const Dots = ({ className }) => <span className={`h-px shrink-0 border-t border-dotted border-black ${className}`} />;

function Viewport() {
  return (
    <svg viewBox="378 169 649 717" className="w-[649px] h-[717px] shrink-0 block">
      <path d="M766 170L947 886" stroke="#777" strokeWidth="1.200" />
      <path d="M857 170L866 570L878 886" stroke="#666" strokeWidth="1.200" />
      <path d="M378 613L648 589" stroke="#777" strokeWidth="1.200" />
      <path d="M650 429L864 480M650 429L652 532" stroke="#0a78e8" strokeWidth="1.200" fill="none" />
      <polygon points="643,533 670,644 672,679" fill="#555" />
      <polygon points="643,533 1027,499 1027,612 670,644" fill="#666" stroke="#0a0a9a" strokeWidth="1" />
      <polygon points="670,644 1027,612 1027,648 672,679" fill="#404040" />
      <path d="M670 644L1027 612" stroke="#0a0a9a" strokeWidth="1" />
      <path d="M853 513L882 630" stroke="#6b6b6b" strokeWidth="1" />
      <path d="M648 589L1027 555" stroke="#6c6c6c" strokeWidth="1" />
      <path d="M886 644L895 679" stroke="#808080" strokeWidth="1.200" />
      <path d="M631 555L1027 520M631 555L685 621M632 620L644 619M687 686L1027 655M884 662L885 667" stroke="#0a78e8" strokeWidth="1.200" fill="none" />
      <path d="M864 480L866 560M631 556L632 620M685 621L687 685" stroke="#e8e81e" strokeWidth="1.200" fill="none" />
      <path d="M866 560L866.500 570" stroke="#0a78e8" strokeWidth="2" />
      <path d="M856 570L878 569M866 565L868 575" stroke="#23237e" strokeWidth="1" />
      <text x="429" y="884" fontSize="10" fill="#1a3fd0" fontFamily="Liberation Sans">Z</text>
    </svg>
  );
}

const gridRows = [
  { h: 'h-[25px]', a: '更新类型', b: <GridText t="WCS 更新" /> },
  { h: 'h-[22px]', err: true, a: 'WCS to Update : 要更新的 WCS', b: <span className="text-[#f01010] tracking-[1px]"><Mix t="<< 错误  未定义 >>" cjk="text-[15px]" lat="text-[12.500px] whitespace-pre" /></span> },
  { h: 'h-[25px]', a: 'Update/Set : 更新/设定', b: <GridText t="更新" /> },
  { h: 'h-[22px]', a: 'Feature : 特征', b: null },
  { h: 'h-[25px]', a: '使用X', b: <GridText t="是" /> },
  { h: 'h-[25px]', a: '使用Y', b: <GridText t="是" /> },
  { h: 'h-[25px]', a: '使用Z', b: <GridText t="是" /> },
  { h: 'h-[21px]', a: '空范围值 (B)', b: <GridText t="0" /> },
];

function PropGrid() {
  return (
    <div className="h-[213px] shrink-0 bg-white border-l-2 border-l-[#555] border-b-2 border-b-[#d0d0d0] text-[#222]">
      <div className="flex h-[22px] bg-[#f4f4ff] border-b border-[#d8d8d8]">
        <div className="w-[13px] flex items-center justify-center border-r border-[#d8d8d8] bg-white"><Expander open /></div>
        <div className="w-[200px] pl-[5px] flex items-center text-[15px] font-bold border-r border-[#d8d8d8]">一般</div>
      </div>
      {gridRows.map((r, i) => (
        <div key={i} className={`flex ${r.h} border-b border-[#d8d8d8] last:border-b-0`}>
          <div className="w-[13px] flex items-center justify-center border-r border-[#d8d8d8] text-[#d9534f] text-[12px] font-bold leading-none">{r.err ? '✖' : ''}</div>
          <div className="w-[200px] pl-[5px] flex items-center border-r border-[#d8d8d8] whitespace-nowrap overflow-hidden"><span><GridText t={r.a} /></span></div>
          <div className="flex-1 pl-[4px] flex items-center whitespace-nowrap"><span>{r.b}</span></div>
        </div>
      ))}
    </div>
  );
}

function DialogButton({ children }) {
  return (
    <div className="w-[63px] h-[36px] shrink-0 border border-t-white border-l-white border-r-[#404040] border-b-[#404040] border-r-2 border-b-2 flex items-center justify-center">
      {children}
    </div>
  );
}

function Dialog() {
  return (
    <div className="absolute left-[649px] top-[133px] w-[730px] h-[584px] flex flex-col bg-[#d4d0c8] border-l border-l-white border-t border-t-white pl-[3px] pt-[2px]">
      <div className="h-[25px] shrink-0 bg-[#808080] flex items-center pl-[3px] gap-[6px]">
        <svg viewBox="0 0 20 20" className="w-[20px] h-[20px]">
          <rect x="1" y="1" width="7" height="10" fill="#bbb" /><rect x="9" y="9" width="8" height="10" fill="#fff" /><path d="M4 11v7" stroke="#e44" />
        </svg>
        <span className="text-[14px] font-bold text-[#e6e6e6]">测头对话框</span>
      </div>
      <Row start={1031} big items={dlg1} className="h-[34px] shrink-0 border-b border-b-[#808080]" />
      <Row start={1031} big items={dlg2} className="h-[32px] shrink-0 border-t border-t-white" />
      <div className="flex h-[428px] shrink-0">
        <div className="relative w-[258px] shrink-0 bg-white border-l-2 border-t-2 border-l-[#555] border-t-[#555] border-r-2 border-b-2 border-r-[#e8e8e8] border-b-[#c8c4bc]">
          {[['工件测量循环程序', 'Cycle1'], ['工件测量循环程序', 'Cycle2']].map(([a, b], i) => (
            <div key={i} className="h-[22px] flex items-center pl-[6px]">
              <Expander />
              <Dots className="w-[6px] border-[#888]" />
              <span className="flex"><Icon k="dpage" className="w-[18px] h-[20px]" /></span>
              <span className="ml-[4px] whitespace-nowrap"><GridText t={`${a}: ${b}`} /></span>
            </div>
          ))}
          <div className="h-[22px] flex items-center pl-[10px]">
            <Dots className="w-[11px] border-[#888]" />
            <svg viewBox="0 0 20 20" className="w-[18px] h-[18px] shrink-0">
              <path d="M3 1l8 6M11 3v4H6" stroke="#111" strokeWidth="1.800" fill="none" />
              <path d="M3 9l9 9M12 9l-9 9" stroke="#d9534f" strokeWidth="3.500" />
              <text x="11" y="18" fontSize="9" fontWeight="700" fontFamily="Liberation Sans">c</text>
            </svg>
            <span className="ml-[3px] pl-[4px] h-[22px] w-[124px] bg-[#c8c8c8] flex items-center whitespace-nowrap"><span><GridText t="机床更新: Update1" /></span></span>
          </div>
          <span className="absolute left-[10px] top-[11px] h-[33px] border-l border-dotted border-[#888]" />
        </div>
        <div className="flex-1 ml-[4px] flex flex-col border-l border-l-[#808080] border-b border-b-white min-w-0">
          <PropGrid />
          <div className="mt-[2px] flex-1 mb-[6px] relative border-t-2 border-t-[#808080] border-l border-l-white">
            <div className="absolute left-[4px] top-[15px] right-0 bottom-0 border-l border-t border-b border-[#808080] shadow-[inset_1px_1px_0_#fff,0_1px_0_#fff]" />
            <span className="absolute left-[10px] top-[5px] px-[3px] bg-[#d4d0c8] text-[18px] font-bold text-[#111] leading-[22px]">帮助信息</span>
          </div>
        </div>
      </div>
      <div className="flex-1 flex items-start pt-[11px] pl-[483px] gap-[11px]">
        <DialogButton>
          <svg viewBox="0 0 20 20" className="w-[20px] h-[20px]"><path d="M2 11l3-2l3 4L17 2l1 1L9 19H7z" fill="#35b32a" stroke="#0d7a12" strokeWidth="0.600" /></svg>
        </DialogButton>
        <DialogButton>
          <svg viewBox="0 0 20 20" className="w-[20px] h-[20px]"><path d="M5 1l5 5l5-5l4 4l-5 5l5 5l-4 4l-5-5l-5 5l-4-4l5-5l-5-5z" fill="#f0400a" /></svg>
        </DialogButton>
        <DialogButton>
          <svg viewBox="0 0 24 24" className="w-[24px] h-[24px]"><circle cx="12" cy="12" r="11.500" fill="#1668c8" stroke="#0d3f86" /><path d="M12 5v14M5 12h14" stroke="#fff" strokeWidth="4" /></svg>
        </DialogButton>
        <DialogButton />
      </div>
      <span className="absolute left-[505px] top-[560px] whitespace-nowrap text-[16px] font-bold leading-[16px] text-white font-['DejaVu_Sans','Noto_Sans_CJK_SC',sans-serif] [text-shadow:1px_0_0_#ef2d3d,-1px_0_0_#ef2d3d,0_1px_0_#ef2d3d,0_-1px_0_#ef2d3d]">三维网www.3dportal.cn</span>
    </div>
  );
}

function TreeRow({ className = 'pl-[9px]', children }) {
  return <div className={`h-[16px] flex items-center whitespace-nowrap text-[12px] text-black ${className}`}>{children}</div>;
}

function ToolpathTree() {
  return (
    <div className="relative flex-1 bg-[#0080ff] overflow-hidden">
      <TreeRow>
        <Expander open />
        <Dots className="w-[5px]" />
        <svg viewBox="0 0 16 16" className="w-[16px] h-[16px] shrink-0">
          <rect x="1" y="1" width="6" height="6" fill="#19c8d8" stroke="#1a2ee0" /><rect x="9" y="1" width="6" height="6" fill="#19c8d8" stroke="#1a2ee0" /><rect x="1" y="9" width="6" height="6" fill="#19c8d8" stroke="#1a2ee0" /><rect x="9" y="9" width="6" height="6" fill="#19c8d8" stroke="#1a2ee0" />
        </svg>
        <span className="ml-[5px]">机床群组-1</span>
      </TreeRow>
      <TreeRow className="pl-[28px]">
        <Expander />
        <Dots className="w-[5px]" />
        <svg viewBox="0 0 16 16" className="w-[16px] h-[16px] shrink-0"><path d="M1 14.500h14M4 14V9M8 14V3M12 14V9" stroke="#1a1ae0" strokeWidth="2" /></svg>
        <span className="ml-[5px]"><TreeText t="属性 - 3 - AXIS VMC" /></span>
      </TreeRow>
      <TreeRow className="pl-[28px]">
        <Expander open />
        <Dots className="w-[5px]" />
        <svg viewBox="0 0 16 16" className="w-[16px] h-[16px] shrink-0">
          <circle cx="4" cy="4" r="3" fill="#19c8e8" stroke="#1a2ee0" /><circle cx="12" cy="4" r="3" fill="#19c8e8" stroke="#1a2ee0" /><circle cx="4" cy="12" r="3" fill="#19c8e8" stroke="#1a2ee0" /><circle cx="12" cy="12" r="3" fill="#19c8e8" stroke="#1a2ee0" />
        </svg>
        <span className="ml-[5px]">刀具群组-1</span>
      </TreeRow>
      <TreeRow className="pl-[47px]">
        <Expander open />
        <Dots className="w-[5px]" />
        <svg viewBox="0 0 16 16" className="w-[16px] h-[16px] shrink-0">
          <path d="M1 4h5l1 2h6v8H1z" fill="#7a6a10" stroke="#111" /><path d="M5 8h10l-3 6H2z" fill="#f2e020" stroke="#111" /><path d="M5 7l2 3l5-8" stroke="#0b6a30" strokeWidth="1.500" fill="none" />
        </svg>
        <span className="ml-[4px] h-[16px] w-[243px] pl-[2px] bg-[#e8e8e8] flex items-center"><span className="tracking-[0.2px]"><TreeText t="1 - 测头 - [WCS: 平面] - [刀具面: 平面] - Cycle1" /></span></span>
      </TreeRow>
      <TreeRow className="pl-[70px]">
        <Dots className="w-[10px]" />
        <svg viewBox="0 0 16 16" className="w-[16px] h-[16px] shrink-0"><path d="M1 3h5l1 2h8v10H1z" fill="#c8c8c8" stroke="#111" /></svg>
        <span className="ml-[5px]"><TreeText t="参数 - 加工坐标系 #0" /></span>
      </TreeRow>
      <TreeRow className="pl-[70px]">
        <Dots className="w-[10px]" />
        <svg viewBox="0 0 16 16" className="w-[16px] h-[16px] shrink-0"><path d="M5 1h6v9l-3 5l-3-5z" fill="#1a2ea0" stroke="#111" /><path d="M6 8l4-4M6 11l4-4" stroke="#7fa0ff" /></svg>
        <span className="ml-[5px]"><TreeText t="#0 - M0.00 未定义 - SAMPLEPROBE" /></span>
      </TreeRow>
      <TreeRow className="pl-[70px]">
        <Dots className="w-[10px]" />
        <svg viewBox="0 0 16 16" className="w-[16px] h-[16px] shrink-0">
          <rect x="1" y="1" width="14" height="14" fill="#e8e8e8" /><path d="M1 3q4-3 7 0t7 0M1 8q4-3 7 0t7 0M1 13q4-3 7 0t7 0" fill="none" stroke="#111" strokeWidth="2" />
        </svg>
        <span className="ml-[5px]"><TreeText t="刀路 - 7.3K - T.NC - 程序号码 0" /></span>
      </TreeRow>
      <TreeRow className="pl-[51px]">
        <Dots className="w-[10px]" />
        <svg viewBox="0 0 16 16" className="w-[16px] h-[16px] shrink-0"><path d="M0 0l16 8l-16 8z" fill="#f00000" /><rect x="0" y="0" width="2" height="16" fill="#b00000" /></svg>
      </TreeRow>
      <span className="absolute left-[32px] top-[16px] h-[24px] border-l border-dotted border-black" />
      <span className="absolute left-[51px] top-[44px] h-[76px] border-l border-dotted border-black" />
      <span className="absolute left-[70px] top-[64px] h-[40px] border-l border-dotted border-black" />
    </div>
  );
}

export default function App() {
  return (
    <div className="relative w-[1753px] h-[886px] overflow-hidden bg-[#f0f0f0] font-['Liberation_Sans','Noto_Sans_CJK_SC',sans-serif]">
      <div className="h-[14px] flex items-center">
        <svg viewBox="0 0 20 20" className="w-[18px] h-[18px] shrink-0">
          <path d="M2 2l14 14M16 2L3 17" stroke="#222" strokeWidth="3" /><path d="M12 1l3 5" stroke="#d9a520" strokeWidth="2" />
        </svg>
        <span className="ml-[7px] font-['Liberation_Mono','Noto_Sans_CJK_SC',monospace] text-[12.400px] text-[#a8a8a8] whitespace-pre">Mastercam 铣削 X9  D:\用户目录\我的文档\my mcamx9\mcx\T.mcx-9</span>
      </div>
      <div className="h-[28px] flex items-center pl-[11px] gap-[17px] text-[14px] text-[#111]">
        {menus.map(([n, k]) => (
          <span key={k} className="whitespace-nowrap">{n}<span className="font-['Liberation_Mono'] text-[10.500px]">{k}</span></span>
        ))}
      </div>
      <Row items={row1} className="h-[24px]" />
      <Row items={row2} className="h-[26px]" />
      <div className="h-[30px] pt-[1px] flex items-center">
        <span className="w-[3px] h-[18px] ml-[2px] border-l-2 border-dotted border-[#bcbcbc]" />
        <span className="w-[3px]" />
        <CoordInput label="X" value="-58.35058" />
        <CoordInput label="Y" value="70.69721" />
        <CoordInput label="Z" value="0.0" />
        <Row start={524} items={row3} />
      </div>
      <div className="flex">
        <LeftStrip />
        <div className="flex-1 min-w-0 flex flex-col">
          <div className="h-[43px] shrink-0 pl-[251px] pt-[14px]">
            <div className="w-[82px] h-[17px] bg-[#d4d0c8] flex items-center text-[12px] text-[#111] whitespace-nowrap">功能状态栏</div>
          </div>
          <div className="h-[4px] shrink-0 bg-[#e3e3e3]" />
          <div className="flex h-[717px]">
            <div className="w-[356px] shrink-0 flex flex-col">
              <div className="h-[32px] shrink-0 flex items-center pl-[5px] pr-[9px]">
                <span className="text-[24px] text-[#444] leading-none font-light">刀路</span>
                <span className="ml-auto w-0 h-0 border-x-[6px] border-x-transparent border-t-[6px] border-t-[#666]" />
                <svg viewBox="0 0 12 14" className="ml-[9px] w-[11px] h-[13px]"><path d="M3 1h6M4 1v6M8 1v6M1 8h10M6 8v5" stroke="#555" strokeWidth="1.200" fill="none" /></svg>
                <svg viewBox="0 0 12 12" className="ml-[9px] w-[11px] h-[11px]"><path d="M1 1l10 10M11 1L1 11" stroke="#555" strokeWidth="1.300" /></svg>
              </div>
              <Row start={22} items={panel1} className="h-[25px] shrink-0" />
              <Row start={22} items={panel2} className="h-[25px] shrink-0" />
              <div className="flex-1 min-h-0 w-[352px] bg-white pt-[8px] px-[3.500px] flex flex-col">
                <ToolpathTree />
              </div>
            </div>
            <div className="relative flex-1 min-w-0 bg-black overflow-hidden">
              <Viewport />
              <Dialog />
            </div>
          </div>
        </div>
      </div>
      <div className="absolute left-[1031px] top-[144px] w-[92px] h-[24px] rounded-[5px] border border-[#b6cdea] overflow-hidden flex items-center bg-[linear-gradient(90deg,#1e63c8_0%,#6aa3ea_60%,#a9c9f2_78%,#d6e6fa_78%)] shadow-[0_1px_2px_#8a8a8a]">
        <span className="w-[23px] h-full shrink-0 bg-[#0f4aa8] flex items-center justify-center">
          <svg viewBox="0 0 20 20" className="w-[20px] h-[20px]"><path d="M1 8l17-6l-5 16l-3-6l-3 4v-6z" fill="#fff" /></svg>
        </span>
        <span className="ml-[5px] text-[10.500px] text-[#111] whitespace-nowrap">525.64 KB/s</span>
      </div>
      <svg viewBox="0 0 1753 886" className="absolute left-0 top-0 w-[1753px] h-[886px] pointer-events-none">
        <path d="M1281 452C1290 438 1330 444 1380 445C1430 447 1500 445 1547 438C1580 433 1610 426 1635 428C1665 432 1682 442 1680 452C1678 464 1640 472 1590 476C1550 479 1510 480 1477 475C1440 470 1380 471 1340 470C1310 470 1276 468 1281 452Z" fill="none" stroke="#0a0a0a" strokeWidth="3" />
      </svg>
    </div>
  );
}
